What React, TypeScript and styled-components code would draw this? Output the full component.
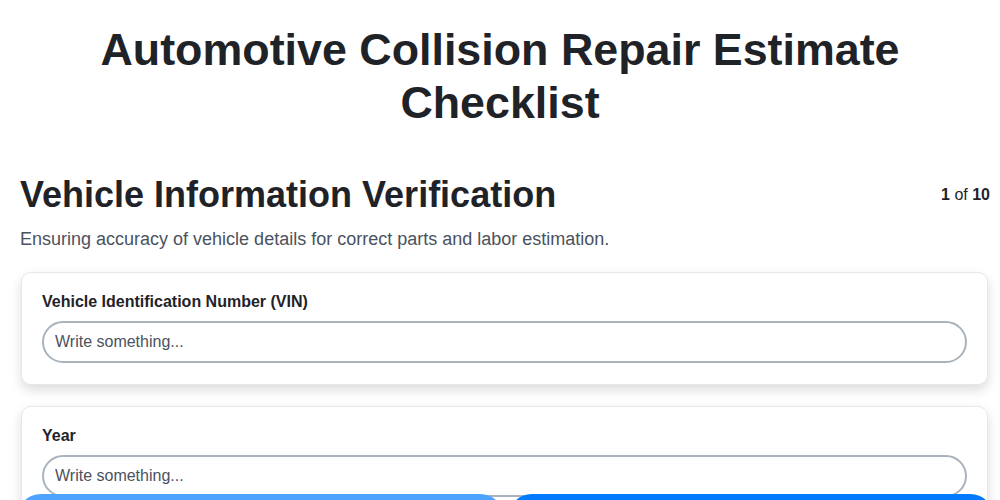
import * as React from 'react';
import styled, { createGlobalStyle } from 'styled-components';

const GlobalStyle = createGlobalStyle`
	* {
		box-sizing: border-box;
	}
	body {
		margin: 0;
		background: #fff;
		color: #1f2328;
		font-family: 'Liberation Sans', Arial, Helvetica, sans-serif;
	}
`;

const Page = styled.div`
	padding: 20px 10px 80px 20px;
`;

const Title = styled.h1`
	margin: 3px 10px 44px 0;
	font-size: 44.8px;
	line-height: 53px;
	font-weight: 700;
	text-align: center;
	color: #1f2328;
`;

const SectionHeader = styled.div`
	display: flex;
	align-items: flex-start;
	justify-content: space-between;
`;

const SectionTitle = styled.h2`
	margin: 0;
	font-size: 36px;
	line-height: 44px;
	font-weight: 700;
	color: #1f2328;
`;

const Counter = styled.span`
	font-size: 16px;
	line-height: 44px;
	color: #1f2328;
	b {
		font-weight: 700;
	}
`;

const Description = styled.p`
	margin: 10px 0 21px;
	font-size: 18px;
	line-height: 24px;
	color: #4a5260;
`;

const Fields = styled.div`
	display: flex;
	flex-direction: column;
	gap: 21px;
	padding-left: 1px;
	padding-right: 2px;
`;

const Card = styled.div`
	background: #fff;
	border: 1px solid #e6e8ee;
	border-radius: 10px;
	box-shadow: 0 5px 12px rgba(0, 0, 0, 0.14);
	padding: 19px 20px 21px;
`;

const Label = styled.label`
	display: block;
	margin-bottom: 10px;
	font-size: 16px;
	line-height: 19px;
	font-weight: 700;
	color: #1f2328;
`;

const Input = styled.input`
	display: block;
	width: 100%;
	height: 42px;
	padding: 0 11px;
	border: 2px solid #aab3bc;
	border-radius: 21px;
	font-family: inherit;
	font-size: 16px;
	color: #1f2328;
	background: #fff;
	outline: none;
	&::placeholder {
		color: #4a5260;
	}
`;

const Footer = styled.div`
	position: fixed;
	left: 0;
	right: 0;
	bottom: 0;
	height: 6px;
	overflow: hidden;
	display: flex;
	gap: 4px;
	padding: 0 6px 0 17px;
`;

const NavButton = styled.button<{ $muted?: boolean }>`
	flex: 1;
	height: 50px;
	border: none;
	border-radius: 24px;
	background: ${(p) => (p.$muted ? '#4da3ff' : '#007bff')};
	cursor: pointer;
`;

const fields = ['Vehicle Identification Number (VIN)', 'Year', 'Make', 'Model'];

function App() {
	return (
		<>
			<GlobalStyle />
			<Page>
				<Title>Automotive Collision Repair Estimate Checklist</Title>
				<SectionHeader>
					<SectionTitle>Vehicle Information Verification</SectionTitle>
					<Counter>
						<b>1</b> of <b>10</b>
					</Counter>
				</SectionHeader>
				<Description>
					Ensuring accuracy of vehicle details for correct parts and labor estimation.
				</Description>
				<Fields>
					{fields.map((f) => (
						<Card key={f}>
							<Label>{f}</Label>
							<Input placeholder="Write something..." />
						</Card>
					))}
				</Fields>
			</Page>
			<Footer>
				<NavButton $muted aria-label="Previous" />
				<NavButton aria-label="Next" />
			</Footer>
		</>
	);
}

export default App;
